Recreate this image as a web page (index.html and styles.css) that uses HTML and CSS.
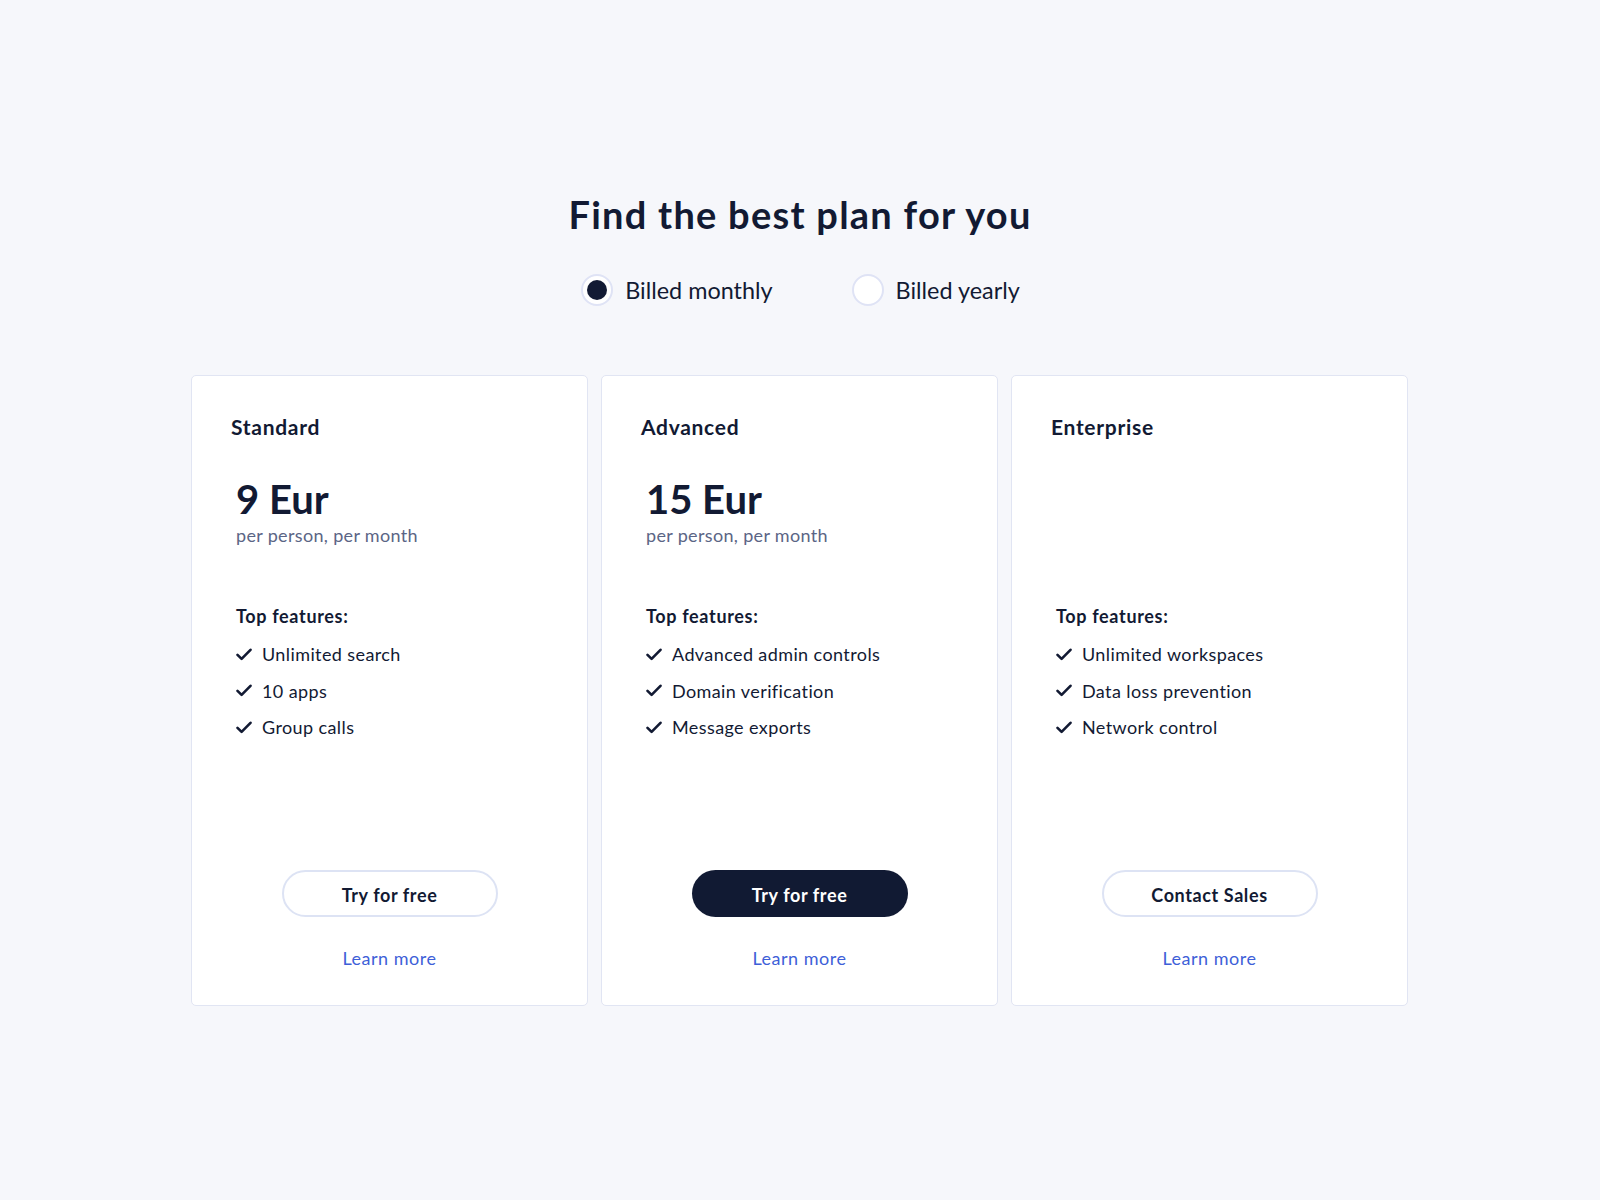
FILE: index.html
```html
<!DOCTYPE html>
<html lang="en">
<head>
<meta charset="utf-8">
<title>Pricing</title>
<link rel="stylesheet" href="styles.css">
</head>
<body>
<main class="page">
  <h1 class="title">Find the best plan for you</h1>
  <div class="billing">
    <label class="option"><span class="radio radio--checked"></span><span>Billed monthly</span></label>
    <label class="option"><span class="radio"></span><span>Billed yearly</span></label>
  </div>
  <div class="plans">
    <section class="card">
      <h2 class="plan-name">Standard</h2>
      <div class="price-block">
        <div class="price">9 Eur</div>
        <div class="per">per person, per month</div>
      </div>
      <div class="features">
        <h3 class="features-title">Top features:</h3>
        <ul class="feature-list">
          <li><svg class="check" viewBox="0 0 16 13"><path d="M1.5 6.8 L5.6 10.9 L14.5 1.8"/></svg>Unlimited search</li>
          <li><svg class="check" viewBox="0 0 16 13"><path d="M1.5 6.8 L5.6 10.9 L14.5 1.8"/></svg>10 apps</li>
          <li><svg class="check" viewBox="0 0 16 13"><path d="M1.5 6.8 L5.6 10.9 L14.5 1.8"/></svg>Group calls</li>
        </ul>
      </div>
      <div class="actions">
        <a class="btn btn--outline" href="#">Try for free</a>
        <a class="learn" href="#">Learn more</a>
      </div>
    </section>
    <section class="card">
      <h2 class="plan-name">Advanced</h2>
      <div class="price-block">
        <div class="price">15 Eur</div>
        <div class="per">per person, per month</div>
      </div>
      <div class="features">
        <h3 class="features-title">Top features:</h3>
        <ul class="feature-list">
          <li><svg class="check" viewBox="0 0 16 13"><path d="M1.5 6.8 L5.6 10.9 L14.5 1.8"/></svg>Advanced admin controls</li>
          <li><svg class="check" viewBox="0 0 16 13"><path d="M1.5 6.8 L5.6 10.9 L14.5 1.8"/></svg>Domain verification</li>
          <li><svg class="check" viewBox="0 0 16 13"><path d="M1.5 6.8 L5.6 10.9 L14.5 1.8"/></svg>Message exports</li>
        </ul>
      </div>
      <div class="actions">
        <a class="btn btn--solid" href="#">Try for free</a>
        <a class="learn" href="#">Learn more</a>
      </div>
    </section>
    <section class="card">
      <h2 class="plan-name">Enterprise</h2>
      <div class="price-block"></div>
      <div class="features">
        <h3 class="features-title">Top features:</h3>
        <ul class="feature-list">
          <li><svg class="check" viewBox="0 0 16 13"><path d="M1.5 6.8 L5.6 10.9 L14.5 1.8"/></svg>Unlimited workspaces</li>
          <li><svg class="check" viewBox="0 0 16 13"><path d="M1.5 6.8 L5.6 10.9 L14.5 1.8"/></svg>Data loss prevention</li>
          <li><svg class="check" viewBox="0 0 16 13"><path d="M1.5 6.8 L5.6 10.9 L14.5 1.8"/></svg>Network control</li>
        </ul>
      </div>
      <div class="actions">
        <a class="btn btn--outline" href="#">Contact Sales</a>
        <a class="learn" href="#">Learn more</a>
      </div>
    </section>
  </div>
</main>
</body>
</html>
```
FILE: styles.css
```css
* { box-sizing: border-box; }

html, body {
  margin: 0;
  padding: 0;
}

body {
  background: #f6f7fb;
  color: #121a33;
  font-family: "Lato", "Open Sans", sans-serif;
  min-height: 1200px;
}

.page {
  padding-top: 191px;
  display: flex;
  flex-direction: column;
  align-items: center;
}

.title {
  margin: 0;
  font-size: 38px;
  line-height: 46px;
  font-weight: 700;
  color: #121a33;
  letter-spacing: 1.25px;
}

.billing {
  margin-top: 37px;
  display: flex;
  gap: 79px;
  height: 32px;
  margin-left: 1px;
}

.option {
  display: flex;
  align-items: center;
  gap: 12px;
  font-size: 23.4px;
  line-height: 32px;
  color: #121a33;
}

.radio {
  width: 32px;
  height: 32px;
  border-radius: 50%;
  border: 2px solid #dfe3f5;
  background: #fff;
  display: flex;
  align-items: center;
  justify-content: center;
  flex: none;
}

.radio--checked::after {
  content: "";
  width: 20px;
  height: 20px;
  border-radius: 50%;
  background: #121a33;
}

.plans {
  margin-top: 69px;
  display: flex;
  gap: 13px;
  margin-right: 1px;
}

.card {
  width: 397px;
  height: 631px;
  background: #fff;
  border: 1px solid #e1e5f3;
  border-radius: 5px;
  padding: 39px 39px 35px 39px;
  display: flex;
  flex-direction: column;
}

.plan-name {
  margin: 0;
  font-size: 21px;
  line-height: 24px;
  font-weight: 700;
  letter-spacing: 0.7px;
  color: #121a33;
}

.price-block {
  margin-top: 36px;
  height: 72px;
  padding-left: 5px;
}

.price {
  font-size: 40px;
  line-height: 48px;
  font-weight: 700;
  color: #121a33;
}

.per {
  font-size: 18px;
  line-height: 24px;
  letter-spacing: 0.33px;
  color: #5b6585;
}

.features {
  margin-top: 57px;
  padding-left: 5px;
}

.features-title {
  margin: 0;
  font-size: 18px;
  line-height: 24px;
  font-weight: 700;
  letter-spacing: 0.66px;
  color: #121a33;
}

.feature-list {
  list-style: none;
  margin: 8px 0 0 0;
  padding: 0;
}

.feature-list li {
  display: flex;
  align-items: center;
  gap: 10px;
  font-size: 18px;
  line-height: 36.5px;
  height: 36.5px;
  letter-spacing: 0.4px;
  color: #121a33;
}

.check {
  width: 16px;
  height: 13px;
  flex: none;
  fill: none;
  stroke: #121a33;
  stroke-width: 2.6;
  stroke-linecap: round;
  stroke-linejoin: round;
}

.actions {
  margin-top: auto;
  display: flex;
  flex-direction: column;
  align-items: center;
}

.btn {
  width: 216px;
  height: 47px;
  border-radius: 24px;
  display: flex;
  align-items: center;
  justify-content: center;
  font-size: 18px;
  font-weight: 700;
  letter-spacing: 0.6px;
  padding-top: 2px;
  text-decoration: none;
}

.btn--outline {
  border: 2px solid #dde3f4;
  background: #fff;
  color: #121a33;
}

.btn--solid {
  background: #111a33;
  color: #fff;
}

.learn {
  margin-top: 29px;
  font-size: 18px;
  line-height: 24px;
  letter-spacing: 0.5px;
  color: #3e5fd8;
  text-decoration: none;
}
```
